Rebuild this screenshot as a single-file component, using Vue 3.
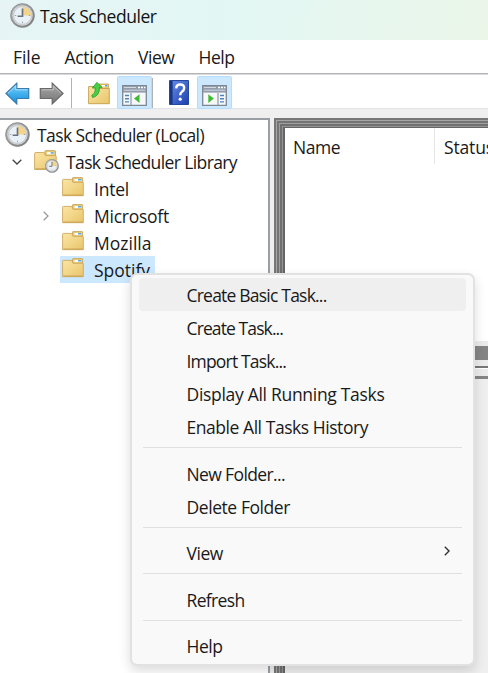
<script setup>
const menus = [
  { label: 'File', w: 27.5 },
  { label: 'Action', w: 49.5 },
  { label: 'View', w: 36.5 },
  { label: 'Help', w: 36 },
]
const folders = [
  { label: 'Intel', w: 35 },
  { label: 'Microsoft', w: 75 },
  { label: 'Mozilla', w: 57.5 },
  { label: 'Spotify', w: 56, selected: true },
]
folders[1].expandable = true
const groups = [
  [
    { label: 'Create Basic Task...', w: 140, active: true },
    { label: 'Create Task...', w: 96.5 },
    { label: 'Import Task...', w: 99.5 },
    { label: 'Display All Running Tasks', w: 198 },
    { label: 'Enable All Tasks History', w: 181.5 },
  ],
  [
    { label: 'New Folder...', w: 98.5 },
    { label: 'Delete Folder', w: 103.5 },
  ],
  [{ label: 'View', w: 36.5, sub: true }],
  [{ label: 'Refresh', w: 58 }],
  [{ label: 'Help', w: 36 }],
]

// Tracks a label so that it occupies the given width.
const vFit = {
  mounted(el, { value }) {
    const natural = el.getBoundingClientRect().width
    el.style.letterSpacing = `${(value - natural) / el.textContent.length}px`
  },
}
</script>

<template>
  <div class="window">
    <svg class="defs" width="0" height="0" aria-hidden="true">
      <defs>
        <linearGradient id="gold" x1="0" y1="0" x2="1" y2="1">
          <stop offset="0" stop-color="#fbe6a6" /><stop offset="1" stop-color="#e9c56c" />
        </linearGradient>
        <linearGradient id="rim" x1="0" y1="0" x2="1" y2="1">
          <stop offset="0" stop-color="#b9b9b9" /><stop offset="1" stop-color="#777" />
        </linearGradient>
        <linearGradient id="blue" x1="0" y1="0" x2="0" y2="1">
          <stop offset="0" stop-color="#7fd2fa" /><stop offset="1" stop-color="#0d8fe0" />
        </linearGradient>
        <linearGradient id="grey" x1="0" y1="0" x2="0" y2="1">
          <stop offset="0" stop-color="#aaa" /><stop offset="1" stop-color="#747474" />
        </linearGradient>
        <linearGradient id="book" x1="0" y1="0" x2="1" y2="1">
          <stop offset="0" stop-color="#6b8fe6" /><stop offset="1" stop-color="#1c3faf" />
        </linearGradient>
        <symbol id="clock" viewBox="0 0 24 24">
          <circle cx="12" cy="12" r="11.4" fill="url(#rim)" stroke="#858585" stroke-width=".8" />
          <circle cx="12" cy="12" r="9.8" fill="#d7d9da" />
          <circle cx="12" cy="12" r="8.6" fill="#e9f0f6" stroke="#b8bec4" stroke-width=".7" />
          <path d="M12 12V3.6A8.4 8.4 0 0 1 20.4 12Z" fill="#f3d48a" />
          <path d="M12 5.2V12.7H7.3" fill="none" stroke="#68737f" stroke-width="1.6" />
          <path d="M12 18v1.5M18 12h1.5M4.5 12H6" stroke="#9aa4ad" />
        </symbol>
        <symbol id="folder" viewBox="0 0 22 20">
          <path d="M10.5 4V1.2Q10.5 .6 11.1 .6H20Q20.6 .6 20.6 1.2V6H10.5Z" fill="#e9cb7d" stroke="#c9a45a" stroke-width=".9" />
          <path d="M12.5 2H19v2h-6.5Z" fill="#fff" /><path d="M16 2h3v1.5h-3Z" fill="#5aa9dc" />
          <path d="M.6 3.2Q.6 2.4 1.4 2.4H9.5L11 5.3H20.8Q21.3 5.3 21.3 6V18.7H.6Z" fill="url(#gold)" stroke="#cda85c" stroke-width=".9" />
          <path d="M1.4 18H20.6" stroke="#c79c4d" stroke-width=".8" />
        </symbol>
      </defs>
    </svg>

    <header class="titlebar">
      <svg class="clock"><use href="#clock" /></svg>
      <span v-fit="116.5" class="title">Task Scheduler</span>
    </header>

    <nav class="menubar">
      <span v-for="m in menus" :key="m.label" v-fit="m.w">{{ m.label }}</span>
    </nav>

    <div class="toolbar">
      <svg class="arrow" viewBox="0 0 25 23">
        <path d="M1 11.5 11.8 1.2V6.7H23.7V16.5H11.8V21.9Z" fill="url(#blue)" stroke="#397bad" stroke-width="1.2" />
        <path d="M3 11.3 10.7 3.9V7.8H22.6" fill="none" stroke="#a6e2fc" stroke-width="1" />
      </svg>
      <svg class="arrow fwd" viewBox="0 0 25 23">
        <path d="M24 11.5 13.2 1.2V6.7H1.3V16.5H13.2V21.9Z" fill="url(#grey)" stroke="#696969" stroke-width="1.2" />
        <path d="M2.5 7.8H14.3V3.9L22 11.3" fill="none" stroke="#c3c3c3" stroke-width="1" />
      </svg>
      <i class="divider first"></i>
      <svg class="up" viewBox="0 0 22 24">
        <path d="M11 5V3H20.4V8H11Z" fill="#edca77" stroke="#c69d4c" stroke-width=".8" />
        <path d="M14 4h5v1.5h-5Z" fill="#fff" /><path d="M17 4h2v1.5h-2Z" fill="#4ca7dd" />
        <path d="M.6 5.5H8L9.5 7.5H21.3V22.7H.6Z" fill="url(#gold)" stroke="#c69d4c" stroke-width=".9" />
        <path d="M3.8 14.2Q7.6 12.6 7.2 7H4.3L9 1.3 14 6.4H11.4Q12 14.4 4.6 16.6Z" fill="#48cf45" stroke="#279b2d" stroke-width=".8" />
      </svg>
      <span class="tool on">
        <svg class="pane" viewBox="0 0 25 21">
          <path d="M.7.7H24.3V20.3H.7Z" fill="#f7f8fa" stroke="#7c8794" stroke-width="1.3" />
          <path d="M1 1H24V7.6H1Z" fill="#929caa" /><path d="M2 2.5H14M2 5.2H23" stroke="#d2d9e2" />
          <path d="M16 2.5h2M19 2.5h2M22 2.5h1.4" stroke="#fff" stroke-width="1.4" />
          <path d="M9 8V20" stroke="#8c97a4" stroke-width="1.2" />
          <path d="M3 10.5H7M3 13.7H7M3 16.9H7" stroke="#4c83be" stroke-width="1.4" />
          <path d="M17.5 9.2V18L12 13.6Z" fill="#3fb933" />
        </svg>
      </span>
      <i class="divider second"></i>
      <svg class="book" viewBox="0 0 20 25">
        <path d="M.5.5H19.5V24.5H.5Z" fill="url(#book)" stroke="#24469d" />
        <path d="M1 1H3.6V24H1Z" fill="#173589" />
        <path d="M7.2 8.4Q7.3 4.5 11.2 4.5 15.2 4.5 15.2 8 15.2 10.2 12.9 11.8 11.2 13 11.2 15.3" fill="none" stroke="#fff" stroke-width="2.4" />
        <circle cx="11.2" cy="19.2" r="1.6" fill="#fff" />
      </svg>
      <span class="tool on">
        <svg class="pane" viewBox="0 0 25 21">
          <path d="M.7.7H24.3V20.3H.7Z" fill="#f7f8fa" stroke="#7c8794" stroke-width="1.3" />
          <path d="M1 1H24V7.6H1Z" fill="#929caa" /><path d="M2 2.5H14M2 5.2H23" stroke="#d2d9e2" />
          <path d="M16 2.5h2M19 2.5h2M22 2.5h1.4" stroke="#fff" stroke-width="1.4" />
          <path d="M16 8V20" stroke="#8c97a4" stroke-width="1.2" />
          <path d="M18 10.5H22M18 13.7H22M18 16.9H22" stroke="#4c83be" stroke-width="1.4" />
          <path d="M6.3 9.2V18L11.8 13.6Z" fill="#3fb933" />
        </svg>
      </span>
    </div>

    <main class="body">
      <aside class="tree">
        <div class="row root">
          <svg class="clock"><use href="#clock" /></svg>
          <span v-fit="167">Task Scheduler (Local)</span>
        </div>
        <div class="row library">
          <svg class="chev" viewBox="0 0 10 6"><path d="M.7.7 5 5 9.3.7" fill="none" stroke="#444" stroke-width="1.3" /></svg>
          <svg class="lib" viewBox="0 0 24 22">
            <use href="#folder" width="22" height="20" />
            <use href="#clock" x="10.5" y="8.5" width="13.5" height="13.5" />
          </svg>
          <span v-fit="171">Task Scheduler Library</span>
        </div>
        <div v-for="f in folders" :key="f.label" class="row child">
          <div class="gutter">
            <svg v-if="f.expandable" viewBox="0 0 6 10"><path d="M.7.7 5 5 .7 9.3" fill="none" stroke="#999" stroke-width="1.3" /></svg>
          </div>
          <div class="node" :class="{ selected: f.selected }">
            <svg class="folder"><use href="#folder" /></svg>
            <span v-fit="f.w">{{ f.label }}</span>
          </div>
        </div>
      </aside>

      <section class="pane-frame">
        <div class="list">
          <div class="cell name"><span v-fit="47">Name</span></div>
          <div class="cell"><span v-fit="50">Status</span></div>
        </div>
        <div class="splitter"></div>
        <div class="band"></div>
        <div class="rule one"></div>
        <div class="rule two"></div>
        <div class="rest"></div>
      </section>
    </main>

    <div class="context">
      <div v-for="(g, i) in groups" :key="i" class="group">
        <div v-for="item in g" :key="item.label" class="item" :class="{ active: item.active }">
          <span v-fit="item.w">{{ item.label }}</span>
          <svg v-if="item.sub" class="sub" viewBox="0 0 6 10"><path d="M.8.8 5 5 .8 9.2" fill="none" stroke="#333" stroke-width="1.4" /></svg>
        </div>
      </div>
    </div>
  </div>
</template>

<style>
body { margin: 0; overflow: hidden; }
</style>

<style scoped>
.window {
  position: relative;
  display: flex;
  flex-direction: column;
  width: 488px;
  height: 673px;
  overflow: hidden;
  background: #efefef;
  color: #191919;
  font: 17.5px/27px "Open Sans", "Noto Sans", sans-serif;
  white-space: nowrap;
}
svg { display: block; flex: none; }
span { flex: none; }
.defs { position: absolute; }
.clock { width: 25px; height: 25px; }
.titlebar {
  display: flex;
  flex: none;
  gap: 5px;
  height: 36px;
  padding: 3px 0 1px 10px;
  background: linear-gradient(100deg, #e6f4f5 0%, #e2f7f4 45%, #ebf6e9 100%);
}
.title { line-height: 27px; color: #111; }
.menubar {
  display: flex;
  flex: none;
  gap: 24px;
  height: 33px;
  padding-left: 13px;
  line-height: 35px;
  background: #fff;
  border-bottom: 1px solid #b4b4b6;
}
.toolbar {
  display: flex;
  flex: none;
  align-items: flex-start;
  height: 32px;
  padding: 1px 0 0 5px;
  background: #fff;
  border-top: 1px solid #d9d9dd;
  border-bottom: 1px solid #e3e3e3;
}
.arrow { width: 25px; height: 23px; margin-top: 6px; }
.fwd { margin-left: 9px; }
.divider { width: 1px; height: 30px; margin-top: 2px; background: #b2b2b2; }
.first { margin-left: 7px; }
.up { width: 22px; height: 24px; margin: 5px 7px 0 16px; }
.tool { display: flex; box-sizing: border-box; width: 35px; height: 33px; padding: 8px 0 0 4px; border: 1px solid #b5dcfb; border-radius: 2px; background: #cce8ff; }
.pane { width: 25px; height: 21px; }
.second { margin-left: 0; }
.book { width: 20px; height: 25px; margin: 4px 8px 0 16px; }
.body { display: flex; flex: none; height: 555px; padding-top: 9px; }
.tree {
  flex: none;
  box-sizing: border-box;
  width: 270px;
  padding-top: 1px;
  background: #fff;
  border: 0 solid #9a9fa6;
  border-width: 2px 2px 0 0;
}
.row { display: flex; align-items: center; height: 27px; }
.row span { padding-top: 2px; }
.root { padding-left: 5px; gap: 7px; }
.library { padding-left: 12px; }
.chev { width: 10px; height: 6px; margin-right: 12px; }
.lib { width: 25px; height: 23px; margin-right: 7px; }
.gutter { display: flex; justify-content: center; width: 32px; padding-left: 30px; box-sizing: content-box; margin-right: -2px; }
.gutter svg { width: 6px; height: 10px; }
.node { display: flex; align-items: center; height: 27px; padding: 0 5px 0 2px; }
.node.selected { background: #cce8ff; }
.folder { width: 22px; height: 20px; margin: -4px 10px 0 0; }
.pane-frame {
  flex: 1;
  min-width: 0;
  display: flex;
  flex-direction: column;
  margin-left: 4px;
  border-left: 2px solid #777;
  border-top: 2px solid #777;
  padding: 8px 0 0 9px;
  background: #777;
  box-shadow: inset 1px 1px #a6a6a6, inset 3px 3px #747474, inset 4px 4px #a0a0a0, inset 6px 6px #707070, inset 7px 7px #949494, inset 9px 9px #656565;
}
.list { display: flex; flex: none; height: 213px; background: #fff; }
.cell { height: 36px; line-height: 39px; padding-left: 9px; overflow: hidden; }
.name { box-sizing: border-box; flex: none; width: 150px; border-right: 1px solid #e5e5e5; padding-left: 8px; }
.splitter { flex: none; height: 5px; background: #ececec; }
.band { flex: none; height: 14px; background: #858585; }
.rule { flex: none; box-sizing: border-box; background: #ececec; }
.one { height: 8px; border-bottom: 2px solid #777; }
.two { height: 11px; border-top: 1px solid #fff; border-bottom: 3px solid #858585; }
.rest { flex: 1; background: #efefef; }
.context {
  position: absolute;
  left: 130px;
  top: 273px;
  box-sizing: border-box;
  width: 345px;
  height: 393px;
  padding: 3px 7px 0;
  background: #f9f9f9;
  border: 2px solid #e2e2e2;
  border-radius: 7px;
  box-shadow: 0 5px 12px rgba(0, 0, 0, .14);
}
.group + .group { padding-top: 13.5px; background: linear-gradient(#e0e0e0, #e0e0e0) 4px 4px / 319px 1px no-repeat; }
.item { display: flex; align-items: center; height: 33px; padding: 0 16px 0 47.5px; border-radius: 4px; }
.item span { padding-top: 2px; }
.item.active { background: #efefef; }
.sub { width: 6px; height: 10px; margin: -4px 0 0 auto; }
</style>
